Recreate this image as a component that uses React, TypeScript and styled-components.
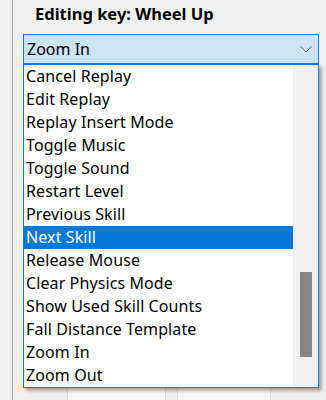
import React from "react";
import styled, { createGlobalStyle } from "styled-components";

const Global = createGlobalStyle`
  html, body {
    margin: 0;
    padding: 0;
    background: #f0f0f0;
  }
  body {
    font-family: "Noto Sans", "Open Sans", Arial, sans-serif;
    color: #000;
  }
`;

const Page = styled.div`
  position: relative;
  width: 326px;
  height: 400px;
  overflow: hidden;
  background: #f0f0f0;
`;

const Panel = styled.div`
  margin-left: 12px;
  height: 100%;
  border-left: 1px solid #a0a0a0;
  padding-left: 10px;
  box-sizing: border-box;
`;

const Title = styled.div`
  height: 34px;
  padding-left: 12px;
  font-weight: 700;
  font-size: 16.5px;
  line-height: 28px;
  white-space: nowrap;
`;

const ComboWrap = styled.div`
  position: relative;
  width: 296px;
`;

const Combo = styled.div`
  box-sizing: border-box;
  height: 30px;
  background: #cce4f7;
  border: 1px solid #0078d7;
  display: flex;
  align-items: center;
  justify-content: space-between;
  padding: 0 6px 0 3px;
  font-size: 16px;
`;

const Popup = styled.div`
  position: absolute;
  top: 30px;
  left: 0;
  width: 296px;
  box-sizing: border-box;
  border: 1px solid #0078d7;
  background: #fff;
  display: flex;
  box-shadow: 3px 3px 3px rgba(0, 0, 0, 0.3);
  z-index: 2;
`;

const List = styled.div`
  flex: 1;
  background: #fff;
`;

const Item = styled.div<{ $selected?: boolean }>`
  height: 23px;
  line-height: 23px;
  padding-left: 2px;
  font-size: 16px;
  letter-spacing: 0.1px;
  white-space: nowrap;
  background: ${(p) => (p.$selected ? "#0078d7" : "transparent")};
  color: ${(p) => (p.$selected ? "#fff" : "#000")};
`;

const Track = styled.div`
  width: 25px;
  background: #f0f0f0;
  padding-top: 207px;
  box-sizing: border-box;
`;

const Thumb = styled.div`
  width: 12px;
  height: 85px;
  margin-left: 7px;
  background: #858585;
`;

const BoxRow = styled.div`
  display: flex;
  gap: 11px;
  margin-top: 300px;
  margin-left: 44px;
`;

const Box = styled.div<{ $w: number }>`
  width: ${(p) => p.$w}px;
  height: 120px;
  box-sizing: border-box;
  border: 1px solid #dadada;
  background: #f7f7f7;
`;

const items = [
  "Cancel Replay",
  "Edit Replay",
  "Replay Insert Mode",
  "Toggle Music",
  "Toggle Sound",
  "Restart Level",
  "Previous Skill",
  "Next Skill",
  "Release Mouse",
  "Clear Physics Mode",
  "Show Used Skill Counts",
  "Fall Distance Template",
  "Zoom In",
  "Zoom Out",
];

const Chevron = () => (
  <svg width="12" height="7" viewBox="0 0 12 7" fill="none">
    <polyline points="0.5,0.5 6,6 11.5,0.5" stroke="#606060" strokeWidth="1" />
  </svg>
);

export default function App() {
  return (
    <>
      <Global />
      <Page>
        <Panel>
          <Title>Editing key: Wheel Up</Title>
          <ComboWrap>
            <Combo>
              <span>Zoom In</span>
              <Chevron />
            </Combo>
            <Popup>
              <List>
                {items.map((it) => (
                  <Item key={it} $selected={it === "Next Skill"}>
                    {it}
                  </Item>
                ))}
              </List>
              <Track>
                <Thumb />
              </Track>
            </Popup>
          </ComboWrap>
          <BoxRow>
            <Box $w={99} />
            <Box $w={94} />
          </BoxRow>
        </Panel>
      </Page>
    </>
  );
}
